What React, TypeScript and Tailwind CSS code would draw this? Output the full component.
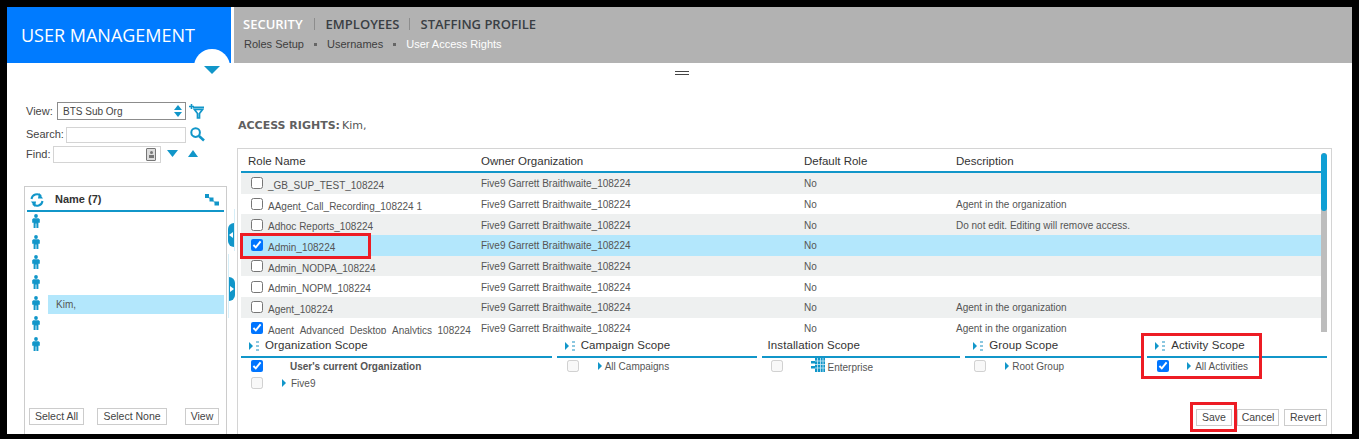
const TEAL = "#1196c9";

const roles = [
  { name: "_GB_SUP_TEST_108224", desc: "", checked: false },
  { name: "AAgent_Call_Recording_108224 1", desc: "Agent in the organization", checked: false },
  { name: "Adhoc Reports_108224", desc: "Do not edit. Editing will remove access.", checked: false },
  { name: "Admin_108224", desc: "", checked: true, selected: true },
  { name: "Admin_NODPA_108224", desc: "", checked: false },
  { name: "Admin_NOPM_108224", desc: "", checked: false },
  { name: "Agent_108224", desc: "Agent in the organization", checked: false },
  { name: "Agent_Advanced_Desktop_Analytics_108224", desc: "Agent in the organization", checked: true },
];

const Triangle = ({ dir, className }: { dir: "up" | "down" | "right"; className?: string }) => {
  const points = {
    up: "0,10 6,0 12,10",
    down: "0,0 12,0 6,10",
    right: "0,0 0,12 10,6",
  }[dir];
  return (
    <svg
      viewBox={dir === "right" ? "0 0 10 12" : "0 0 12 10"}
      preserveAspectRatio="none"
      className={className}
    >
      <polygon points={points} fill={TEAL} />
    </svg>
  );
};

const Person = () => (
  <svg viewBox="0 0 8 14" className="w-[8px] h-[14px]">
    <circle cx="4" cy="2" r="1.9" fill={TEAL} />
    <path d="M1.4 4.2h5.2l1.2 1v3.6H6.4V14H4.4V9.6H3.6V14H1.6V8.8H.2V5.2z" fill={TEAL} />
  </svg>
);

const ScopeTitle = ({ label, icon = true, className }: { label: string; icon?: boolean; className?: string }) => (
  <div className={`flex flex-col ${className}`}>
    <div className="h-[19px] flex items-center gap-[5px] text-[11.5px] font-medium tracking-[0.1px] text-[#333]">
      {icon && (
        <svg viewBox="0 0 11 10" className="w-[11px] h-[10px] ml-[8px] shrink-0">
          <polygon points="0,1 0,9 4,5" fill={TEAL} />
          <rect x="7" y="0" width="3" height="2" fill="#8cc8e0" />
          <rect x="7" y="4" width="3" height="2" fill="#8cc8e0" />
          <rect x="7" y="8" width="3" height="2" fill="#8cc8e0" />
        </svg>
      )}
      <span className={icon ? "" : "ml-[6px]"}>{label}</span>
    </div>
    <div className="h-[2px] mt-[1px] bg-[#1196c9]" />
  </div>
);

const TreeArrow = () => <Triangle dir="right" className="block w-[4px] h-[8px] shrink-0" />;

const ActionButton = ({ label, className }: { label: string; className?: string }) => (
  <button className={`h-[17px] border border-[#ccc] bg-white text-[10.5px] leading-none text-[#444] ${className}`}>
    {label}
  </button>
);

const CollapseHandle = ({ dir, className }: { dir: "left" | "right"; className: string }) => (
  <div className={`absolute flex items-center justify-center bg-[#1196c9] ${className}`}>
    <span
      className={
        dir === "left"
          ? "border-y-[3px] border-y-transparent border-r-[4px] border-r-white"
          : "border-y-[3px] border-y-transparent border-l-[4px] border-l-white"
      }
    />
  </div>
);

export default function App() {
  return (
    <div className="h-[439px] w-[1359px] bg-black pt-[7px] px-[7px] pb-[5px] overflow-hidden font-['Liberation_Sans',Arial,sans-serif] text-[10px] text-[#555]">
      <div className="relative h-full bg-white flex flex-col overflow-hidden">
        {/* Top banner */}
        <div className="flex h-[56px] shrink-0 bg-white">
          <div className="relative w-[224px] bg-[#007bff] overflow-hidden">
            <div className="pl-[14px] pt-[15px] font-['Open_Sans',sans-serif] text-[18px] leading-[26px] font-medium text-white">
              USER MANAGEMENT
            </div>
            <div className="absolute left-[187px] top-[42px] w-[36px] h-[36px] rounded-full bg-white" />
          </div>
          <div className="ml-[3px] flex-1 bg-[#b2b2b2] pl-[9px] pt-[8px]">
            <div className="flex items-center font-['Open_Sans',sans-serif] text-[13px] leading-[18px] font-semibold text-[#3a3f44]">
              <span className="text-white">SECURITY</span>
              <span className="mx-[11px] w-px h-[12px] bg-[#8d8d8d]" />
              <span>EMPLOYEES</span>
              <span className="mx-[10px] w-px h-[12px] bg-[#8d8d8d]" />
              <span>STAFFING PROFILE</span>
            </div>
            <div className="mt-[4px] flex items-center pl-px text-[11px] leading-[14px] text-[#3e3e3e]">
              <span>Roles Setup</span>
              <span className="mx-[10px] w-[3px] h-[3px] bg-[#666]" />
              <span>Usernames</span>
              <span className="mx-[10px] w-[3px] h-[3px] bg-[#666]" />
              <span className="text-white font-medium">User Access Rights</span>
            </div>
          </div>
        </div>

        {/* Resize grip and menu chevron */}
        <div className="absolute left-[197px] top-[59px]">
          <Triangle dir="down" className="block w-[16px] h-[8px]" />
        </div>
        <div className="absolute left-[668px] top-[64px] w-[14px] h-[4px] border-y border-[#444]" />

        <div className="flex flex-1 min-h-0">
          {/* Left sidebar */}
          <div className="w-[219px] shrink-0 pl-[17px] pt-[39px] flex flex-col">
            <div className="flex items-center h-[18px] text-[11px] text-[#444]">
              <span className="w-[33px] pl-[2px]">View:</span>
              <div className="w-[129px] h-[18px] border border-[#8c8c8c] flex items-center justify-between pl-[5px] pr-[3px] text-[10px] text-[#444]">
                <span>BTS Sub Org</span>
                <span className="flex flex-col gap-[2px]">
                  <Triangle dir="up" className="block w-[8px] h-[5px]" />
                  <Triangle dir="down" className="block w-[8px] h-[5px]" />
                </span>
              </div>
              <svg viewBox="0 0 15 15" className="ml-[3px] w-[15px] h-[15px]">
                <path d="M0 2.5h5M2.5 0v5" stroke={TEAL} strokeWidth="1.6" />
                <path d="M4 2.5h11v2H4z" fill={TEAL} />
                <path d="M5.5 5.5h8l-3 4v4.5h-2V9.5z" fill="none" stroke={TEAL} strokeWidth="1.7" />
              </svg>
            </div>
            <div className="flex items-center h-[17px] mt-[6px] text-[11px] text-[#444]">
              <span className="w-[42px] pl-[2px]">Search:</span>
              <div className="w-[120px] h-[16px] border border-[#d4d4d4]" />
              <svg viewBox="0 0 15 15" className="ml-[4px] w-[15px] h-[15px]">
                <circle cx="5.6" cy="5.6" r="4.3" fill="none" stroke={TEAL} strokeWidth="2" />
                <path d="M9 9l5 4.5" stroke={TEAL} strokeWidth="2.6" />
              </svg>
            </div>
            <div className="flex items-center h-[17px] mt-[3px] text-[11px] text-[#444]">
              <span className="w-[29px] pl-[2px]">Find:</span>
              <div className="w-[108px] h-[17px] border border-[#d4d4d4] flex items-center justify-end pr-[4px]">
                <div className="w-[10px] h-[13px] rounded-[1px] border border-[#777] bg-[#ddd] flex flex-col items-center justify-center">
                  <span className="w-[3px] h-[3px] rounded-full bg-[#777]" />
                  <span className="w-[5px] h-[3px] bg-[#777] mt-px" />
                </div>
              </div>
              <Triangle dir="down" className="ml-[6px] w-[11px] h-[7px] -mt-[3px]" />
              <Triangle dir="up" className="ml-[10px] w-[10px] h-[7px] -mt-[3px]" />
            </div>

            <div className="mt-[23px] flex-1 w-[203px] border border-b-0 border-[#ccc] px-[2px] flex flex-col">
              <div className="h-[25px] pt-[2px] flex items-center border-b-2 border-[#1196c9] shrink-0">
                <svg viewBox="0 0 14 14" className="ml-[3px] w-[14px] h-[14px]">
                  <path d="M1.5 6A5.5 5.5 0 0 1 11 3" fill="none" stroke={TEAL} strokeWidth="2" />
                  <polygon points="9,0 13,5.5 8,5.5" fill={TEAL} />
                  <path d="M12.5 8A5.5 5.5 0 0 1 3 11" fill="none" stroke={TEAL} strokeWidth="2" />
                  <polygon points="5,14 1,8.5 6,8.5" fill={TEAL} />
                </svg>
                <span className="ml-[11px] text-[11px] font-bold text-[#333]">Name (7)</span>
                <svg viewBox="0 0 14 12" className="ml-auto mr-[5px] w-[14px] h-[12px]">
                  <path d="M2 2l5 4l5 4" stroke="#8cc8e0" strokeWidth="1.5" fill="none" />
                  <rect x="0" y="0" width="4" height="4" fill={TEAL} />
                  <rect x="4.5" y="3.5" width="4" height="4" fill={TEAL} />
                  <rect x="9.5" y="7.5" width="4.5" height="4" fill={TEAL} />
                </svg>
              </div>
              <div className="flex flex-col -mt-[1px]">
                {[0, 1, 2, 3, 4, 5, 6].map((i) => (
                  <div key={i} className="h-[20.4px] flex items-center">
                    <span className="ml-[5px] w-[16px] flex justify-start">
                      <Person />
                    </span>
                    {i === 4 && (
                      <div className="h-[19px] mt-[3px] flex-1 bg-[#b3e7fc] flex items-center pl-[8px] text-[#555]">
                        Kim,
                      </div>
                    )}
                  </div>
                ))}
              </div>
              <div className="mt-[54px] flex items-center">
                <ActionButton label="Select All" className="w-[55px] ml-[2px]" />
                <ActionButton label="Select None" className="w-[70px] ml-[13px]" />
                <ActionButton label="View" className="w-[34px] ml-[18px]" />
              </div>
            </div>
          </div>

          {/* Collapse handles */}
          <div className="absolute left-[227px] top-[202px] w-px h-[42px] bg-[#d5eef8]" />
          <div className="absolute left-[221px] top-[247px] w-px h-[64px] bg-[#d5eef8]" />
          <CollapseHandle dir="left" className="left-[221px] top-[216px] w-[6px] h-[24px] rounded-l-full" />
          <CollapseHandle dir="right" className="left-[222px] top-[270px] w-[6px] h-[24px] rounded-r-full" />

          {/* Main content */}
          <div className="flex-1 min-w-0 pl-[11px] pr-[20px] flex flex-col">
            <div className="h-[85px] flex items-end pb-[14px] pl-px">
              <span className="font-['DejaVu_Sans',sans-serif] text-[11px] font-bold text-[#5f5f5f]">ACCESS RIGHTS:</span>
              <span className="ml-[2px] font-['DejaVu_Sans',sans-serif] text-[11px] text-[#555]">Kim,</span>
            </div>
            <div className="flex-1 min-h-0 border border-b-0 border-[#d4d4d4] pl-[3px] pr-[4px] flex flex-col overflow-hidden">
              <div className="flex h-[185px] shrink-0">
                <div className="flex-1 min-w-0 flex flex-col">
                  <div className="h-[24px] pt-[3px] shrink-0 grid grid-cols-[240px_323px_152px_1fr] items-center text-[11.5px] font-medium text-[#333] border-b-2 border-[#1196c9]">
                    <span className="pl-[7px]">Role Name</span>
                    <span>Owner Organization</span>
                    <span>Default Role</span>
                    <span>Description</span>
                  </div>
                  <div className="flex-1 min-h-0 overflow-hidden">
                    {roles.map((role, i) => (
                      <div
                        key={role.name}
                        className={`h-[20.7px] pt-[1px] grid grid-cols-[240px_323px_152px_1fr] items-center text-[#555] ${
                          role.selected ? "bg-[#b3e7fc]" : i % 2 === 0 ? "bg-[#eef0f0]" : "bg-white"
                        }`}
                      >
                        <div className="flex items-center pl-[10px]">
                          <input type="checkbox" defaultChecked={role.checked} className="w-[12px] h-[12px] -mt-[1px]" />
                          <span className="ml-[5px] mt-[3px]">{role.name}</span>
                        </div>
                        <span>Five9 Garrett Braithwaite_108224</span>
                        <span>No</span>
                        <span>{role.desc}</span>
                      </div>
                    ))}
                  </div>
                </div>
                <div className="w-[6px] mt-[4px] mb-[2px] bg-[#bdbdbd] rounded-t-[3px] overflow-hidden shrink-0">
                  <div className="h-[58px] bg-[#0f9fd4] rounded-[3px]" />
                </div>
              </div>

              {/* Scope columns */}
              <div className="flex gap-[5px] mt-[2px] shrink-0">
                <ScopeTitle label="Organization Scope" className="w-[311px]" />
                <ScopeTitle label="Campaign Scope" className="w-[200px]" />
                <ScopeTitle label="Installation Scope" icon={false} className="w-[199px]" />
                <ScopeTitle label="Group Scope" className="w-[177px]" />
                <ScopeTitle label="Activity Scope" className="w-[180px]" />
              </div>
              <div className="flex gap-[5px] shrink-0">
                <div className="w-[311px] pl-[10px] flex flex-col">
                  <div className="h-[16px] flex items-center">
                    <input type="checkbox" defaultChecked className="w-[12px] h-[12px]" />
                    <span className="ml-[27px] font-bold text-[#555]">User's current Organization</span>
                  </div>
                  <div className="h-[18px] flex items-center">
                    <input type="checkbox" disabled className="w-[12px] h-[12px]" />
                    <span className="ml-[19px]"><TreeArrow /></span>
                    <span className="ml-[5px]">Five9</span>
                  </div>
                </div>
                <div className="w-[200px] pl-[10px] h-[16px] flex items-center">
                  <input type="checkbox" disabled className="w-[12px] h-[12px]" />
                  <span className="ml-[19px]"><TreeArrow /></span>
                  <span className="ml-[3px]">All Campaigns</span>
                </div>
                <div className="w-[199px] pl-[9px] h-[16px] flex items-center">
                  <input type="checkbox" disabled className="w-[12px] h-[12px]" />
                  <svg viewBox="0 0 14 14" className="ml-[28px] w-[14px] h-[14px] -mt-[2px]">
                    <rect x="4" y="0" width="10" height="14" fill={TEAL} />
                    <rect x="0" y="3" width="4" height="2.5" fill={TEAL} />
                    <rect x="0" y="8" width="4" height="2.5" fill={TEAL} />
                    <path d="M6.5 0v14M9.5 0v14M12 0v14M4 3h10M4 6.5h10M4 10h10" stroke="#cdeaf6" strokeWidth="0.8" />
                  </svg>
                  <span className="ml-[3px] mt-[3px]">Enterprise</span>
                </div>
                <div className="w-[177px] pl-[9px] h-[16px] flex items-center">
                  <input type="checkbox" disabled className="w-[12px] h-[12px]" />
                  <span className="ml-[19px]"><TreeArrow /></span>
                  <span className="ml-[3px]">Root Group</span>
                </div>
                <div className="w-[180px] pl-[10px] h-[16px] flex items-center">
                  <input type="checkbox" defaultChecked className="w-[12px] h-[12px]" />
                  <span className="ml-[18px]"><TreeArrow /></span>
                  <span className="ml-[4px]">All Activities</span>
                </div>
              </div>
              <div className="mt-auto pb-[8px] flex justify-end gap-[5px]">
                <ActionButton label="Save" className="w-[36px]" />
                <ActionButton label="Cancel" className="w-[42px]" />
                <ActionButton label="Revert" className="w-[43px]" />
              </div>
            </div>
          </div>
        </div>

        {/* Red annotation boxes */}
        <div className="absolute left-[233px] top-[226px] w-[131px] h-[26px] border-[3px] border-[#ed1c24]" />
        <div className="absolute left-[1134px] top-[326px] w-[121px] h-[46px] border-[3px] border-[#ed1c24]" />
        <div className="absolute left-[1183px] top-[395px] w-[47px] h-[30px] border-[3px] border-[#ed1c24]" />
      </div>
    </div>
  );
}
